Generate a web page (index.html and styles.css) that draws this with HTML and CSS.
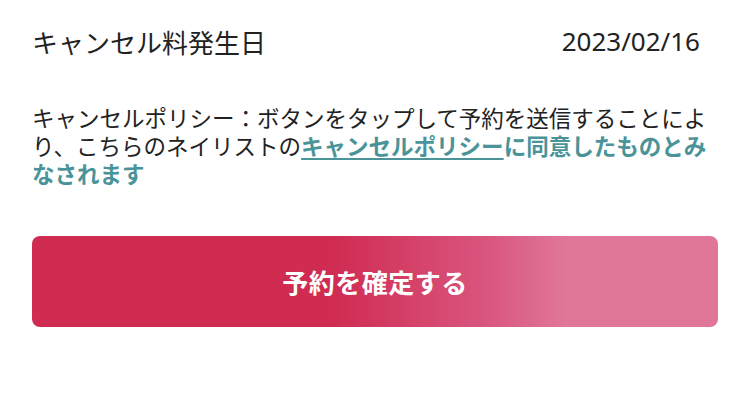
FILE: index.html
```html
<!DOCTYPE html>
<html lang="ja">
<head>
  <meta charset="UTF-8" />
  <meta name="viewport" content="width=device-width, initial-scale=1.0"/>
  <title>予約確認</title>
  <link rel="stylesheet" href="styles.css">
</head>
<body>
  <div class="info-row">
    <span class="info-label">キャンセル料発生日</span>
    <span class="info-date">2023/02/16</span>
  </div>

  <p class="policy">
    キャンセルポリシー：ボタンをタップして予約を送信することにより、こちらのネイリストの<a href="#" class="policy-link">キャンセルポリシー</a><strong class="policy-note">に同意したものとみなされます</strong>
  </p>

  <button type="button" class="confirm-btn">予約を確定する</button>
</body>
</html>
```

FILE: styles.css
```css
body {
  margin: 0;
  padding: 22px 32px 0;
  font-family: "Noto Sans CJK JP", "Noto Sans", sans-serif;
  background-color: #ffffff;
  color: #222222;
}

.info-row {
  display: flex;
  justify-content: space-between;
  align-items: center;
  height: 38px;
  font-size: 26px;
  padding-right: 18px;
}

.info-date {
  font-family: "Noto Sans", sans-serif;
  font-size: 26px;
}

.policy {
  margin: 43px 0 0;
  font-size: 22.5px;
  line-height: 28px;
}

.policy-link {
  color: #4a9499;
  font-weight: bold;
  text-decoration: underline;
  text-decoration-thickness: 2px;
  text-underline-offset: 3px;
}

.policy-note {
  color: #4a9499;
}

.confirm-btn {
  display: block;
  width: 100%;
  height: 91px;
  margin-top: 49px;
  border: none;
  border-radius: 8px;
  background: linear-gradient(to right, #d02c52 0%, #d02c52 44%, #d9557e 66%, #e07799 78%, #e07799 100%);
  color: #ffffff;
  font-family: "Noto Sans CJK JP", sans-serif;
  font-size: 26px;
  font-weight: bold;
  letter-spacing: 0.5px;
  cursor: pointer;
}
```
